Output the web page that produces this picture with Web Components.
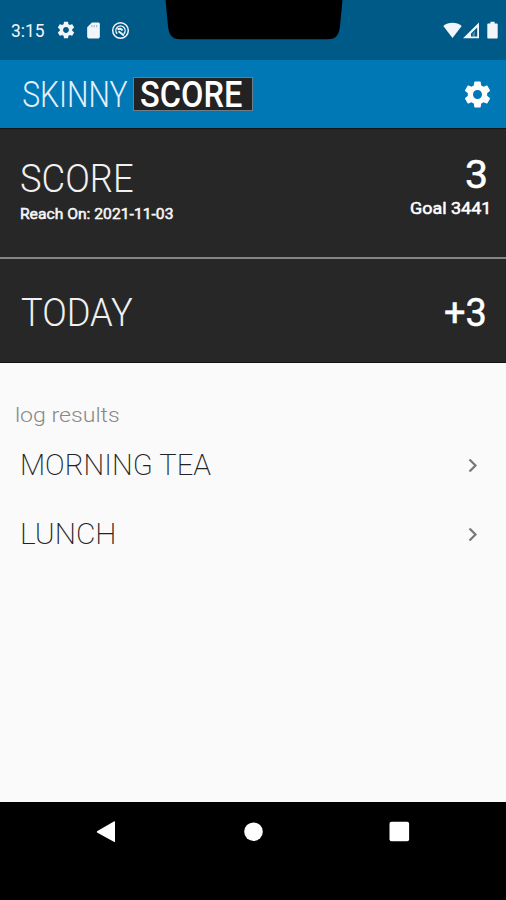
<!DOCTYPE html>
<html lang="en">
<head>
<meta charset="utf-8">
<title>Skinny Score</title>
<style>
  body { margin: 0; background: #fafafa; font-family: Roboto, "Liberation Sans", sans-serif; }
</style>
</head>
<body>
<phone-screen>
  <status-bar slot="status" time="3:15"></status-bar>
  <app-bar slot="bar"></app-bar>
  <score-panel heading="SCORE" tall>
    <fit-text slot="note" width="152" size="15" weight="400">Reach On: 2021-11-03</fit-text>
    <fit-text slot="value" width="20" size="39" weight="400">3</fit-text>
    <fit-text slot="goal" width="78" size="16" weight="400">Goal 3441</fit-text>
  </score-panel>
  <score-panel heading="TODAY">
    <fit-text slot="value" width="40" size="39" weight="400">+3</fit-text>
  </score-panel>
  <log-list label="log results">
    <log-row width="190">MORNING TEA</log-row>
    <log-row width="92">LUNCH</log-row>
  </log-list>
  <nav-bar slot="nav"></nav-bar>
</phone-screen>

<script>
const GEAR = "M19.43 12.98c.04-.32.07-.64.07-.98s-.03-.66-.07-.98l2.11-1.65c.19-.15.24-.42.12-.64l-2-3.46c-.12-.22-.39-.3-.61-.22l-2.49 1c-.52-.4-1.08-.73-1.69-.98l-.38-2.65C14.46 2.18 14.25 2 14 2h-4c-.25 0-.46.18-.49.42l-.38 2.65c-.61.25-1.17.59-1.69.98l-2.49-1c-.23-.09-.49 0-.61.22l-2 3.46c-.13.22-.07.49.12.64l2.11 1.65c-.04.32-.07.65-.07.98s.03.66.07.98l-2.11 1.65c-.19.15-.24.42-.12.64l2 3.46c.12.22.39.3.61.22l2.49-1c.52.4 1.08.73 1.69.98l.38 2.65c.03.24.24.42.49.42h4c.25 0 .46-.18.49-.42l.38-2.65c.61-.25 1.17-.59 1.69-.98l2.49 1c.23.09.49 0 .61-.22l2-3.46c.12-.22.07-.49-.12-.64l-2.11-1.65zM12 15.5c-1.93 0-3.5-1.57-3.5-3.5s1.57-3.5 3.5-3.5 3.5 1.57 3.5 3.5-1.57 3.5-3.5 3.5z";

// Text stretched so its visible glyphs fill exactly the given width
class FitText extends HTMLElement {
  constructor() {
    super();
    this.attachShadow({ mode: "open" });
    this.shadowRoot.innerHTML = `
      <style>
        :host { display: block; flex: none; white-space: nowrap; }
        span { display: inline-block; transform-origin: 0 50%; }
      </style>
      <span><slot></slot></span>
    `;
  }

  connectedCallback() {
    const width = Number(this.getAttribute("width"));
    const size = this.getAttribute("size");
    const weight = this.getAttribute("weight") || "300";
    const ctx = document.createElement("canvas").getContext("2d");
    ctx.font = `${weight} ${size}px Roboto, "Liberation Sans", sans-serif`;
    const m = ctx.measureText(this.textContent.trim());
    const scale = width / (m.actualBoundingBoxRight + m.actualBoundingBoxLeft);
    this.style.width = width + "px";
    this.style.font = ctx.font;
    this.style.lineHeight = size + "px";
    this.style.height = size + "px";
    this.shadowRoot.querySelector("span").style.transform =
      `scaleX(${scale}) translateX(${m.actualBoundingBoxLeft}px)`;
  }
}

class PhoneScreen extends HTMLElement {
  constructor() {
    super();
    this.attachShadow({ mode: "open" });
    this.shadowRoot.innerHTML = `
      <style>
        :host { display: flex; flex-direction: column; width: 506px; height: 900px; overflow: hidden; }
        main { flex: 1; background: #fafafa; }
      </style>
      <slot name="status"></slot>
      <slot name="bar"></slot>
      <main><slot></slot></main>
      <slot name="nav"></slot>
    `;
  }
}

class StatusBar extends HTMLElement {
  constructor() {
    super();
    this.attachShadow({ mode: "open" });
    this.shadowRoot.innerHTML = `
      <style>
        :host {
          display: flex;
          justify-content: space-between;
          align-items: center;
          position: relative;
          box-sizing: border-box;
          height: 60px;
          padding: 0 8px 0 11px;
          background: #005a88;
          color: #f2f6fa;
        }
        div { display: flex; align-items: center; }
        svg { display: block; fill: currentColor; }
        .notch { position: absolute; left: 165px; top: 0; fill: #000; }
      </style>
      <div>
        <fit-text width="33" size="19" weight="400">${this.getAttribute("time")}</fit-text>
        <svg style="margin-left:12px" width="20" height="20" viewBox="0 0 24 24"><path d="${GEAR}"/></svg>
        <svg style="margin-left:8px" width="19" height="19" viewBox="0 0 24 24"><path d="M18 2h-8L4 8v12c0 1.100.9 2 2 2h12c1.100 0 2-.9 2-2V4c0-1.100-.9-2-2-2z"/><path d="M10 5v3M13 5v3M16 5v3" stroke="#8cb2cb" stroke-width="1.200"/></svg>
        <svg style="margin-left:8px" width="19" height="19" viewBox="0 0 19 19">
          <g fill="none" stroke="#f2f6fa">
            <circle cx="9.500" cy="9.500" r="7.800" stroke-width="1.500"/>
            <path d="M6.200 12.800A4.600 4.600 0 1 1 12.800 12.800" stroke-width="1.400"/>
            <path d="M6.500 8.500Q9.500 6.500 11.500 9.500M7.500 10.300L13 14.500" stroke-width="1.900"/>
          </g>
        </svg>
      </div>
      <div>
        <svg width="19" height="17" viewBox="0 0 19 17"><path d="M.3 4.100C5.500-.3 13.500-.3 18.700 4.100L9.500 16z"/></svg>
        <svg style="margin-left:1px" width="17" height="17" viewBox="0 0 17 17"><path fill-rule="evenodd" d="M0 16.300L16 .5v15.800zM8 14.500h6.200V5.500L8 11.500z"/><path d="M9.500 14.500V11.500L12 9v5.500z" opacity=".3"/></svg>
        <svg style="margin-left:7px" width="11" height="18" viewBox="0 0 11 18"><path d="M3.400.7h4.200v1.700h2c.7 0 1.100.4 1.100 1.100v13c0 .7-.4 1.100-1.100 1.100H1.400c-.7 0-1.100-.4-1.100-1.100v-13c0-.7.400-1.100 1.100-1.100h2z"/></svg>
      </div>
      <svg class="notch" width="178" height="40" viewBox="0 0 178 40"><path d="M.5 0H177.500L175 26C174 35 171 39.300 163 39.300H15C7 39.300 4 35 3 26z"/></svg>
    `;
  }
}

class AppBar extends HTMLElement {
  constructor() {
    super();
    this.attachShadow({ mode: "open" });
    this.shadowRoot.innerHTML = `
      <style>
        :host {
          display: flex;
          align-items: center;
          box-sizing: border-box;
          height: 68px;
          padding: 0 13px 0 23px;
          background: #0078b6;
          color: #e6eef8;
        }
        fit-text { margin-top: 2px; }
        .badge {
          box-sizing: border-box;
          margin-left: 5px;
          width: 120px;
          height: 34px;
          padding: 0 0 0 7px;
          display: flex;
          align-items: center;
          background: #222;
          border: 1px solid #6e7c88;
          color: #fff;
        }
        svg { margin-left: auto; fill: #fff; }
      </style>
      <fit-text width="105" size="36">SKINNY</fit-text>
      <div class="badge"><fit-text width="101" size="36" weight="500">SCORE</fit-text></div>
      <svg width="31" height="31" viewBox="0 0 24 24"><path d="${GEAR}"/></svg>
    `;
  }
}

class ScorePanel extends HTMLElement {
  constructor() {
    super();
    this.attachShadow({ mode: "open" });
    this.shadowRoot.innerHTML = `
      <style>
        :host {
          display: flex;
          justify-content: space-between;
          box-sizing: border-box;
          height: 104px;
          padding: 35px 21px 0 21px;
          background: #272727;
          border-bottom: 1px solid #111;
          color: #fff;
        }
        :host([tall]) {
          height: 131px;
          padding: 31px 18px 0 21px;
          border-top: 1px solid #161616;
          border-bottom: 2px solid #858585;
        }
        .left, .right { display: flex; flex-direction: column; }
        .left { color: #f0f0f0; }
        .right { align-items: flex-end; }
        ::slotted([slot="note"]) { margin-top: 9px; }
        :host([tall]) .right { margin-top: -4px; }
        :host([tall]) ::slotted([slot="value"]) { margin-right: 2px; }
        ::slotted([slot="goal"]) { margin-top: 6px; }
        ::slotted(*) { -webkit-text-stroke: .5px #fff; }
      </style>
      <div class="left">
        <fit-text width="112" size="38">${this.getAttribute("heading")}</fit-text>
        <slot name="note"></slot>
      </div>
      <div class="right">
        <slot name="value"></slot>
        <slot name="goal"></slot>
      </div>
    `;
  }
}

class LogList extends HTMLElement {
  constructor() {
    super();
    this.attachShadow({ mode: "open" });
    this.shadowRoot.innerHTML = `
      <style>
        :host { display: block; padding-top: 42px; }
        .label { padding: 0 16px 5px; color: #888; }
      </style>
      <div class="label"><fit-text width="103" size="21">${this.getAttribute("label")}</fit-text></div>
      <slot></slot>
    `;
  }
}

class LogRow extends HTMLElement {
  constructor() {
    super();
    this.attachShadow({ mode: "open" });
    this.shadowRoot.innerHTML = `
      <style>
        :host {
          display: flex;
          align-items: center;
          justify-content: space-between;
          height: 69px;
          padding: 0 28px 0 22px;
          color: #222;
        }
        svg { fill: none; stroke: #777; stroke-width: 2.200; }
      </style>
      <fit-text width="${this.getAttribute("width")}" size="29" weight="200">${this.textContent}</fit-text>
      <svg width="10" height="15" viewBox="0 0 10 15"><path d="M1.500 1.500L7.500 7.500L1.500 13.500"/></svg>
    `;
  }
}

class NavBar extends HTMLElement {
  constructor() {
    super();
    this.attachShadow({ mode: "open" });
    this.shadowRoot.innerHTML = `
      <style>
        :host {
          display: flex;
          justify-content: space-between;
          box-sizing: border-box;
          height: 98px;
          padding: 18px 96px 0;
          background: #000;
        }
        svg { fill: #fff; overflow: visible; }
      </style>
      <svg width="20" height="23" viewBox="0 0 20 23"><path d="M1 11.200L18.300 1.200Q19 1 19 1.800V21.500Q19 22.300 18.300 22L1 12.500Q.6 12 1 11.200z"/></svg>
      <svg width="20" height="23" viewBox="0 0 20 23"><circle cx="10.500" cy="11.700" r="9.300"/></svg>
      <svg width="20" height="23" viewBox="0 0 20 23"><rect x="-.5" y="1.800" width="19.600" height="19.500" rx="2"/></svg>
    `;
  }
}

customElements.define("fit-text", FitText);
customElements.define("phone-screen", PhoneScreen);
customElements.define("status-bar", StatusBar);
customElements.define("app-bar", AppBar);
customElements.define("score-panel", ScorePanel);
customElements.define("log-list", LogList);
customElements.define("log-row", LogRow);
customElements.define("nav-bar", NavBar);
</script>
</body>
</html>
